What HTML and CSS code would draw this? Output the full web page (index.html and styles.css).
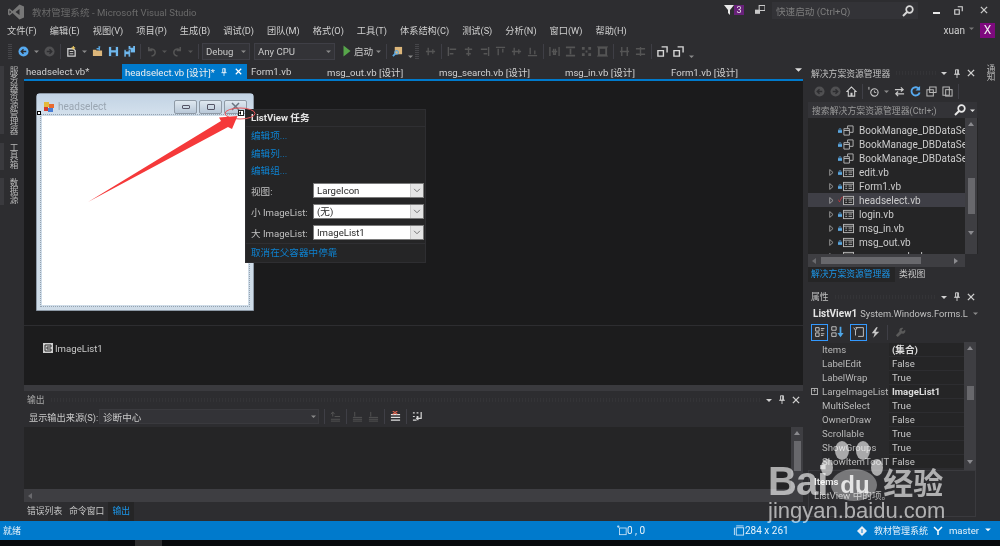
FILE: index.html
```html
<!DOCTYPE html>
<html lang="zh-CN">
<head>
<meta charset="utf-8">
<title>教材管理系统 - Microsoft Visual Studio</title>
<link rel="stylesheet" href="styles.css">
</head>
<body>
<svg class="defs" width="0" height="0" aria-hidden="true">
  <symbol id="i-back" viewBox="0 0 12 12"><circle cx="6" cy="6" r="5.5" fill="currentColor"/><path d="M9 6H4M6 3.5 3.5 6 6 8.5" fill="none" stroke="#2d2d30" stroke-width="1.5"/></symbol>
  <symbol id="i-new" viewBox="0 0 12 12"><path d="M2 3h6l2 2v6H2z" fill="none" stroke="#d0d0d0" stroke-width="1.4"/><path d="M4 6h4M4 8.5h4" stroke="#d0d0d0"/><path d="M8 0v4M6 2h4" stroke="#e8c55e" stroke-width="1.2"/></symbol>
  <symbol id="i-open" viewBox="0 0 12 12"><path d="M1 4h3l1 1h6v6H1z" fill="#dcb67a"/><path d="M5 3h3M8 1v4M7 1h2" stroke="#5aa7e0" stroke-width="1.4" fill="none"/></symbol>
  <symbol id="i-save" viewBox="0 0 12 12"><path d="M1 1h10v10H1z" fill="#6fb8ee"/><path d="M3.5 1h5v3.5h-5zM3.5 7h5v4h-5z" fill="#2d2d30"/></symbol>
  <symbol id="i-saveall" viewBox="0 0 12 12"><path d="M5 0h7v7H5z" fill="#6fb8ee"/><path d="M0 4h7v8H0z" fill="#6fb8ee" stroke="#2d2d30" stroke-width=".7"/><path d="M2 4h3v2H2zM7 0h3v2H7zM2 9h3v3H2z" fill="#2d2d30"/></symbol>
  <symbol id="i-undo" viewBox="0 0 12 12"><path d="M3 1v4h4M3 5c2-3 7-2 7 2 0 2-2 3.500-4 4" fill="none" stroke="#555" stroke-width="1.6"/></symbol>
  <symbol id="i-redo" viewBox="0 0 12 12"><path d="M9 1v4H5M9 5C7 2 2 3 2 7c0 2 2 3.500 4 4" fill="none" stroke="#555" stroke-width="1.6"/></symbol>
  <symbol id="i-play" viewBox="0 0 8 12"><path d="M.5.5 7.500 6 .5 11.500z" fill="#57a64a"/></symbol>
  <symbol id="i-find" viewBox="0 0 12 12"><path d="M3 1h8v8H3z" fill="#dcb67a"/><path d="M1 11l3-3" stroke="#5aa7e0" stroke-width="2"/><circle cx="5" cy="7" r="2" fill="none" stroke="#5aa7e0" stroke-width="1.2"/></symbol>
  <symbol id="i-a1" viewBox="0 0 12 12"><path d="M1.500 1v10M3 3.500h7M3 8.500h4" stroke="#555" stroke-width="1.500" fill="none"/></symbol>
  <symbol id="i-a2" viewBox="0 0 12 12"><path d="M6 1v10M2 3.500h8M3.500 8.500h5" stroke="#555" stroke-width="1.500" fill="none"/></symbol>
  <symbol id="i-a3" viewBox="0 0 12 12"><path d="M10.500 1v10M2 3.500h7M5 8.500h4" stroke="#555" stroke-width="1.500" fill="none"/></symbol>
  <symbol id="i-a4" viewBox="0 0 12 12"><path d="M1 1.500h10M3.500 3v7M8.500 3v4" stroke="#555" stroke-width="1.500" fill="none"/></symbol>
  <symbol id="i-a5" viewBox="0 0 12 12"><path d="M1 6h10M3.500 2v8M8.500 3.500v5" stroke="#555" stroke-width="1.500" fill="none"/></symbol>
  <symbol id="i-a6" viewBox="0 0 12 12"><path d="M1 10.500h10M3.500 2v7M8.500 5v4" stroke="#555" stroke-width="1.500" fill="none"/></symbol>
  <symbol id="i-s1" viewBox="0 0 12 12"><path d="M1 1v10M11 1v10M3 6h6M5 3v6h2V3" stroke="#555" stroke-width="1.500" fill="none"/></symbol>
  <symbol id="i-s2" viewBox="0 0 12 12"><path d="M1 1.500h10M1 10.500h10M6 3v6" stroke="#555" stroke-width="1.800" fill="none"/></symbol>
  <symbol id="i-s3" viewBox="0 0 12 12"><path d="M1 1h3v3H1zM8 1h3v3H8zM1 8h3v3H1zM8 8h3v3H8zM5 5h2v2H5z" fill="#555"/></symbol>
  <symbol id="i-s4" viewBox="0 0 12 12"><rect x="2" y="2" width="8" height="8" fill="none" stroke="#555" stroke-width="2"/><path d="M0 1h12M0 11h12" stroke="#555"/></symbol>
  <symbol id="i-v1" viewBox="0 0 12 12"><path d="M3 1v10M9 1v10M1 6h10" stroke="#555" stroke-width="1.500" fill="none"/></symbol>
  <symbol id="i-v2" viewBox="0 0 12 12"><path d="M1 3h10M1 9h10M6 1v10" stroke="#555" stroke-width="1.500" fill="none"/></symbol>
  <symbol id="i-order" viewBox="0 0 12 12"><path d="M1 5h6v6H1z" fill="none" stroke="#d8d8d8" stroke-width="1.500"/><path d="M5 1h6v6" fill="none" stroke="#d8d8d8" stroke-width="1.500"/></symbol>
  <symbol id="i-home" viewBox="0 0 12 12"><path d="M6 1 1 6h1.500v5h3V8h1v3h3V6H11z" fill="none" stroke="#d0d0d0" stroke-width="1.200"/></symbol>
  <symbol id="i-clock" viewBox="0 0 12 12"><circle cx="7" cy="7" r="4" fill="none" stroke="#c8c8c8" stroke-width="1.200"/><path d="M7 5v2h2M1 1v3" stroke="#c8c8c8"/></symbol>
  <symbol id="i-sync" viewBox="0 0 12 12"><path d="M1 4h9M7.500 1.500 10 4 7.500 6M11 8.500H2M4.500 6 2 8.500 4.500 11" fill="none" stroke="#c8c8c8" stroke-width="1.300"/></symbol>
  <symbol id="i-refresh" viewBox="0 0 12 12"><path d="M10 3.500A4.500 4.500 0 1 0 10.500 7" fill="none" stroke="#57aaf0" stroke-width="2"/><path d="M11 0v5H6z" fill="#57aaf0"/></symbol>
  <symbol id="i-copies" viewBox="0 0 12 12"><path d="M4 1h7v6H4zM1 4h7v7H1z" fill="#2d2d30" stroke="#b8b8b8" stroke-width="1.100"/></symbol>
  <symbol id="i-doc" viewBox="0 0 12 12"><path d="M1 1h7v9H1z" fill="none" stroke="#b8b8b8" stroke-width="1.100"/><rect x="4" y="4" width="7" height="7" fill="none" stroke="#b8b8b8" stroke-width="1.100"/></symbol>
  <symbol id="i-form" viewBox="0 0 12 12"><rect x=".5" y="1.500" width="11" height="9" fill="#252526" stroke="#b9b9b9"/><path d="M.5 3.500h11M2.500 5.500h2M6 5.500h4M2.500 8h2M6 8h4" stroke="#b9b9b9"/></symbol>
  <symbol id="i-ds" viewBox="0 0 12 12"><path d="M5 1h6v7H5z" fill="#252526" stroke="#b9b9b9"/><path d="M1 4h6v7H1z" fill="#252526" stroke="#b9b9b9"/><path d="M1 6h6" stroke="#b9b9b9"/></symbol>
  <symbol id="i-lock" viewBox="0 0 6 7"><path d="M1.500 3V1h3v2" fill="none" stroke="#5aa7e0"/><rect y="3" width="6" height="4" fill="#5aa7e0"/></symbol>
  <symbol id="i-cat" viewBox="0 0 16 16"><path d="M3 3h4v4H3zM3 9h4v4H3z" fill="none" stroke="#cfcfcf"/><path d="M9 4h4M9 6h3M9 10h4M9 12h3" stroke="#cfcfcf"/></symbol>
  <symbol id="i-az" viewBox="0 0 16 16"><path d="M2 2h5v4H2zM2 9h5v4H2z" fill="none" stroke="#cfcfcf"/><path d="M12 2v10" stroke="#4ea6e8" stroke-width="2"/><path d="M8.500 9h7L12 14z" fill="#4ea6e8"/></symbol>
  <symbol id="i-prop" viewBox="0 0 16 16"><path d="M4 3h9v10H7" fill="none" stroke="#cfcfcf"/><path d="M4 6 2 3M4 6l2-3M4 6v6" stroke="#cfcfcf"/></symbol>
  <symbol id="i-bolt" viewBox="0 0 12 14"><path d="M7 0 1 8h4l-2 6 8-8H6l3-6z" fill="#c8c8c8"/></symbol>
  <symbol id="i-wrench" viewBox="0 0 12 12"><path d="M11 3 8.500 5 7 3.500 9 1C6.500 0 4 2 4.800 4.800L1 9l2 2 4.200-3.800C10 8 12 5.500 11 3z" fill="#5a5a5a"/></symbol>
  <symbol id="i-menu" viewBox="0 0 8 7"><path d="M0 2h8L4 6z" fill="currentColor"/></symbol>
  <symbol id="i-pin" viewBox="0 0 8 12"><path d="M2 1h4v6H2zM0 7h8M4 7v5M4.500 1v6" fill="none" stroke="currentColor" stroke-width="1.200"/></symbol>
  <symbol id="i-x" viewBox="0 0 9 9"><path d="M1 1l7 7M8 1 1 8" stroke="currentColor" stroke-width="1.500"/></symbol>
  <symbol id="i-mag" viewBox="0 0 12 12"><circle cx="7.500" cy="4.500" r="3.300" fill="none" stroke="currentColor" stroke-width="1.700"/><path d="M5 7 1 11" stroke="currentColor" stroke-width="2"/></symbol>
  <symbol id="i-tree" viewBox="0 0 6 9"><path d="M.7.700 5 4.500.7 8.300z" fill="none" stroke="#b0b0b0"/></symbol>
  <symbol id="i-chev" viewBox="0 0 9 6"><path d="M1 1l3.500 3.500L8 1" fill="none" stroke="#777" stroke-width="1.200"/></symbol>
  <symbol id="i-o1" viewBox="0 0 12 12"><path d="M1 9h10M1 11h10M5 6h6M3 1v5M1 3.500l2-2.500 2 2.500" stroke="#555" fill="none"/></symbol>
  <symbol id="i-o2" viewBox="0 0 12 12"><path d="M1 7h10M1 9h10M1 11h10M3 1v5" stroke="#555" fill="none"/></symbol>
  <symbol id="i-o3" viewBox="0 0 12 12"><path d="M1 4h10M1 7h10M1 10h10" stroke="#e0e0e0" stroke-width="1.200"/><path d="M3 0l5 3.500M8 0 3 3.500" stroke="#e0644f" stroke-width="1.200"/></symbol>
  <symbol id="i-o4" viewBox="0 0 12 12"><path d="M1 2h2M5 2h2M1 6h2M5 6h2M1 10h4M10 1v7H5M7 6 5 8l2 2" fill="none" stroke="#d8d8d8" stroke-width="1.300"/></symbol>
  <symbol id="i-bars" viewBox="0 0 12 12"><path d="M1 1h10v10H1z" fill="#cfcfcf"/><path d="M3 3h6v2H5v2h4v2H3z" fill="none" stroke="#333"/></symbol>
  <symbol id="i-app" viewBox="0 0 10 10"><rect width="5" height="5" fill="#e4b93b"/><rect x="5" y="2" width="5" height="4" fill="#e96a2e"/><rect y="5" width="4" height="4" fill="#d33c30"/><rect x="4" y="6" width="5" height="4" fill="#4a7fd4"/></symbol>
  <symbol id="i-vs" viewBox="0 0 16 16"><path d="M11.500.5 16 2.500v11L11.500 15.500 4.500 9 1.500 11.500 0 10.500v-5L1.500 4.500 4.500 7zM11.500 5 7.500 8l4 3zM1.500 6.300v3.400L3.200 8z" fill="#777"/></symbol>
  <symbol id="i-git" viewBox="0 0 10 10"><path d="M1 1l4 4 4-4M5 5v4" fill="none" stroke="#fff" stroke-width="1.500"/></symbol>
  <symbol id="i-diamond" viewBox="0 0 10 10"><path d="M5 0l5 5-5 5-5-5z" fill="#e6eef6"/><path d="M5 3v4" stroke="#007acc"/></symbol>
  <symbol id="i-pos" viewBox="0 0 12 12"><rect x="3" y="3" width="8" height="8" fill="none" stroke="#cfe6f7"/><path d="M0 1h3M1.500 0v3" stroke="#cfe6f7"/></symbol>
  <symbol id="i-size" viewBox="0 0 12 12"><rect x="3" y="3" width="8" height="8" fill="none" stroke="#cfe6f7"/><path d="M3 1h8M1 3v8" stroke="#cfe6f7"/></symbol>
  <symbol id="i-filter" viewBox="0 0 10 10"><path d="M0 0h10L6 5v5L4 8V5z" fill="#e8e8e8"/></symbol>
  <symbol id="i-feedback" viewBox="0 0 12 12"><path d="M5 0h7v6H5z" fill="none" stroke="#c8c8c8" stroke-width="1.300"/><path d="M0 5h6v5H0z" fill="#c8c8c8"/></symbol>
</svg>

<div class="app">
  <header class="titlebar">
    <svg class="vs-logo"><use href="#i-vs"/></svg>
    <span class="app-title">教材管理系统 - Microsoft Visual Studio</span>
    <span class="spacer"></span>
    <svg class="ic10"><use href="#i-filter"/></svg>
    <span class="badge">3</span>
    <svg class="feedback"><use href="#i-feedback"/></svg>
    <div class="quick"><span>快速启动 (Ctrl+Q)</span><svg class="ic12 quick-mag"><use href="#i-mag"/></svg></div>
    <div class="winbtns">
      <span class="w-min"></span>
      <svg class="ic12 w-res"><use href="#i-order"/></svg>
      <svg class="ic9 w-x"><use href="#i-x"/></svg>
    </div>
  </header>

  <nav class="menubar">
    <span>文件(F)</span><span>编辑(E)</span><span>视图(V)</span><span>项目(P)</span><span>生成(B)</span><span>调试(D)</span><span>团队(M)</span><span>格式(O)</span><span>工具(T)</span><span>体系结构(C)</span><span>测试(S)</span><span>分析(N)</span><span>窗口(W)</span><span>帮助(H)</span>
    <span class="spacer"></span>
    <span class="user">xuan</span><svg class="user-arrow"><use href="#i-menu"/></svg>
    <span class="avatar">X</span>
  </nav>

  <div class="toolbar">
    <span class="grip"></span>
    <svg class="t t-blue w12"><use href="#i-back"/></svg><svg class="mn"><use href="#i-menu"/></svg>
    <svg class="t t-dim w12 flip"><use href="#i-back"/></svg>
    <i class="sep"></i>
    <svg class="t w12"><use href="#i-new"/></svg><svg class="mn"><use href="#i-menu"/></svg>
    <svg class="t w12"><use href="#i-open"/></svg>
    <svg class="t w12"><use href="#i-save"/></svg>
    <svg class="t w12"><use href="#i-saveall"/></svg>
    <i class="sep"></i>
    <svg class="t w12"><use href="#i-undo"/></svg><svg class="mn mn-dim"><use href="#i-menu"/></svg>
    <svg class="t w12"><use href="#i-redo"/></svg><svg class="mn mn-dim"><use href="#i-menu"/></svg>
    <i class="sep sep-pre"></i>
    <div class="combo c-debug"><span>Debug</span><svg class="mn"><use href="#i-menu"/></svg></div>
    <div class="combo c-cpu"><span>Any CPU</span><svg class="mn"><use href="#i-menu"/></svg></div>
    <svg class="t play"><use href="#i-play"/></svg>
    <span class="start">启动</span><svg class="mn"><use href="#i-menu"/></svg>
    <i class="sep"></i>
    <svg class="t w12"><use href="#i-find"/></svg><svg class="mn mn-low"><use href="#i-menu"/></svg>
    <span class="grip grip-b"></span>
    <svg class="t w12"><use href="#i-a5"/></svg>
    <i class="sep"></i>
    <svg class="t w12"><use href="#i-a1"/></svg><svg class="t w12"><use href="#i-a2"/></svg><svg class="t w12"><use href="#i-a3"/></svg><svg class="t w12"><use href="#i-a4"/></svg><svg class="t w12"><use href="#i-a5"/></svg><svg class="t w12"><use href="#i-a6"/></svg>
    <i class="sep"></i>
    <svg class="t w12"><use href="#i-s1"/></svg><svg class="t w12"><use href="#i-s2"/></svg><svg class="t w12"><use href="#i-s3"/></svg><svg class="t w12"><use href="#i-s4"/></svg>
    <i class="sep"></i>
    <svg class="t w12"><use href="#i-v1"/></svg><svg class="t w12"><use href="#i-v2"/></svg>
    <i class="sep"></i>
    <svg class="t w12"><use href="#i-order"/></svg><svg class="t w12"><use href="#i-order"/></svg><svg class="mn mn-low"><use href="#i-menu"/></svg>
  </div>

  <div class="main">
    <aside class="rail-left">
      <div class="rail-tab rt1"><span>服务器资源管理器</span></div>
      <div class="rail-tab rt2"><span>工具箱</span></div>
      <div class="rail-tab rt3"><span>数据源</span></div>
    </aside>

    <section class="center">
      <div class="tabs">
        <span class="tab t1">headselect.vb*</span>
        <span class="tab active"><span>headselect.vb [设计]*</span><svg class="tab-pin"><use href="#i-pin"/></svg><svg class="tab-x"><use href="#i-x"/></svg></span>
        <span class="tab t3">Form1.vb</span>
        <span class="tab t4">msg_out.vb [设计]</span>
        <span class="tab t5">msg_search.vb [设计]</span>
        <span class="tab t6">msg_in.vb [设计]</span>
        <span class="tab t7">Form1.vb [设计]</span>
        <span class="spacer"></span>
        <svg class="tab-over"><use href="#i-menu"/></svg>
      </div>

      <div class="designer">
        <div class="form">
          <div class="form-title">
            <svg class="form-ic"><use href="#i-app"/></svg>
            <span class="form-name">headselect</span>
            <span class="spacer"></span>
            <span class="fbtn"><i class="g-min"></i></span>
            <span class="fbtn"><i class="g-max"></i></span>
            <span class="fbtn fx"><svg><use href="#i-x"/></svg></span>
          </div>
          <div class="listview-sel"><div class="listview"></div></div>
        </div>
      </div>

      <div class="tray">
        <svg class="ic12"><use href="#i-bars"/></svg><span>ImageList1</span>
      </div>

      <div class="splitter"></div>

      <div class="output">
        <div class="panel-head out-head">
          <span>输出</span><i class="dots"></i>
          <svg class="ph-m"><use href="#i-menu"/></svg><svg class="ph-p"><use href="#i-pin"/></svg><svg class="ph-x"><use href="#i-x"/></svg>
        </div>
        <div class="out-tools">
          <span class="out-label">显示输出来源(S):</span>
          <div class="out-combo"><span>诊断中心</span><svg class="mn"><use href="#i-menu"/></svg></div>
          <i class="sep"></i>
          <svg class="t w12"><use href="#i-o1"/></svg>
          <i class="sep"></i>
          <svg class="t w12"><use href="#i-o2"/></svg>
          <svg class="t w12"><use href="#i-o2"/></svg>
          <i class="sep"></i>
          <svg class="t w12"><use href="#i-o3"/></svg>
          <i class="sep"></i>
          <svg class="t w12"><use href="#i-o4"/></svg>
        </div>
        <div class="out-body">
          <div class="out-text"></div>
          <div class="vscroll">
            <span class="sb-up"></span><span class="sb-thumb out-thumb"></span>
          </div>
        </div>
        <div class="hscroll"><span class="sb-left"></span></div>
        <div class="out-tabs">
          <span>错误列表</span><span>命令窗口</span><span class="out-active">输出</span>
        </div>
      </div>
    </section>

    <aside class="side">
      <div class="panel-head side-head">
        <span>解决方案资源管理器</span><i class="dots"></i>
        <svg class="ph-m"><use href="#i-menu"/></svg><svg class="ph-p"><use href="#i-pin"/></svg><svg class="ph-x"><use href="#i-x"/></svg>
      </div>
      <div class="se-tools">
        <svg class="t w12 t-dim"><use href="#i-back"/></svg>
        <svg class="t w12 t-dim flip"><use href="#i-back"/></svg>
        <svg class="t w12"><use href="#i-home"/></svg>
        <i class="sep"></i>
        <svg class="t w12"><use href="#i-clock"/></svg><svg class="mn"><use href="#i-menu"/></svg>
        <svg class="t w12"><use href="#i-sync"/></svg>
        <svg class="t w12"><use href="#i-refresh"/></svg>
        <svg class="t w12"><use href="#i-copies"/></svg>
        <svg class="t w12"><use href="#i-doc"/></svg>
        <i class="sep"></i>
      </div>
      <div class="se-search">
        <span class="se-q">搜索解决方案资源管理器(Ctrl+;)</span>
        <span class="se-qb"><svg class="ic12"><use href="#i-mag"/></svg><svg class="mn"><use href="#i-menu"/></svg></span>
      </div>
      <div class="tree-wrap">
        <div class="tree">
          <div class="row"><i class="tw"></i><svg class="lk"><use href="#i-lock"/></svg><svg class="fi"><use href="#i-ds"/></svg><span>BookManage_DBDataSet</span></div>
          <div class="row"><i class="tw"></i><svg class="lk"><use href="#i-lock"/></svg><svg class="fi"><use href="#i-ds"/></svg><span>BookManage_DBDataSet</span></div>
          <div class="row"><i class="tw"></i><svg class="lk"><use href="#i-lock"/></svg><svg class="fi"><use href="#i-ds"/></svg><span>BookManage_DBDataSet</span></div>
          <div class="row"><svg class="tw"><use href="#i-tree"/></svg><svg class="lk"><use href="#i-lock"/></svg><svg class="fi"><use href="#i-form"/></svg><span>edit.vb</span></div>
          <div class="row"><svg class="tw"><use href="#i-tree"/></svg><svg class="lk"><use href="#i-lock"/></svg><svg class="fi"><use href="#i-form"/></svg><span>Form1.vb</span></div>
          <div class="row sel"><svg class="tw"><use href="#i-tree"/></svg><span class="chk">✓</span><svg class="fi"><use href="#i-form"/></svg><span>headselect.vb</span></div>
          <div class="row"><svg class="tw"><use href="#i-tree"/></svg><svg class="lk"><use href="#i-lock"/></svg><svg class="fi"><use href="#i-form"/></svg><span>login.vb</span></div>
          <div class="row"><svg class="tw"><use href="#i-tree"/></svg><svg class="lk"><use href="#i-lock"/></svg><svg class="fi"><use href="#i-form"/></svg><span>msg_in.vb</span></div>
          <div class="row"><svg class="tw"><use href="#i-tree"/></svg><svg class="lk"><use href="#i-lock"/></svg><svg class="fi"><use href="#i-form"/></svg><span>msg_out.vb</span></div>
          <div class="row"><svg class="tw"><use href="#i-tree"/></svg><svg class="lk"><use href="#i-lock"/></svg><svg class="fi"><use href="#i-form"/></svg><span>msg_search.vb</span></div>
        </div>
        <div class="vscroll se-v"><span class="sb-up"></span><span class="sb-thumb se-thumb"></span><span class="sb-down"></span></div>
      </div>
      <div class="se-h"><span class="sb-left"></span><span class="se-hthumb"></span><span class="sb-right"></span></div>
      <div class="se-tabs"><span class="se-active">解决方案资源管理器</span><span class="se-other">类视图</span></div>

      <div class="panel-head props-head">
        <span>属性</span><i class="dots"></i>
        <svg class="ph-m"><use href="#i-menu"/></svg><svg class="ph-p"><use href="#i-pin"/></svg><svg class="ph-x"><use href="#i-x"/></svg>
      </div>
      <div class="obj"><b>ListView1</b><span class="obj-type">System.Windows.Forms.L</span><svg class="mn"><use href="#i-menu"/></svg></div>
      <div class="p-tools">
        <span class="pbtn on"><svg><use href="#i-cat"/></svg></span>
        <span class="pbtn"><svg><use href="#i-az"/></svg></span>
        <span class="pbtn on"><svg><use href="#i-prop"/></svg></span>
        <svg class="p-bolt"><use href="#i-bolt"/></svg>
        <i class="sep"></i>
        <svg class="p-wr"><use href="#i-wrench"/></svg>
      </div>
      <div class="grid-wrap">
        <div class="pgrid">
          <div class="pr"><span class="pn">Items</span><span class="pv"><b>(集合)</b></span></div>
          <div class="pr"><span class="pn">LabelEdit</span><span class="pv">False</span></div>
          <div class="pr"><span class="pn">LabelWrap</span><span class="pv">True</span></div>
          <div class="pr"><span class="plus">+</span><span class="pn">LargeImageList</span><span class="pv"><b>ImageList1</b></span></div>
          <div class="pr"><span class="pn">MultiSelect</span><span class="pv">True</span></div>
          <div class="pr"><span class="pn">OwnerDraw</span><span class="pv">False</span></div>
          <div class="pr"><span class="pn">Scrollable</span><span class="pv">True</span></div>
          <div class="pr"><span class="pn">ShowGroups</span><span class="pv">True</span></div>
          <div class="pr"><span class="pn">ShowItemToolT</span><span class="pv">False</span></div>
        </div>
        <div class="vscroll p-v"><span class="sb-up"></span><span class="sb-thumb p-thumb"></span><span class="sb-down"></span></div>
      </div>
      <div class="desc"><b>Items</b><span>ListView 中的项。</span></div>
    </aside>

    <aside class="rail-right"><div class="rail-tab"><span>通知</span></div></aside>
  </div>

  <footer class="status">
    <span class="st-ready">就绪</span>
    <svg class="st-pos"><use href="#i-pos"/></svg><span class="st-a">0 , 0</span>
    <svg class="st-size"><use href="#i-size"/></svg><span class="st-b">284 x 261</span>
    <span class="spacer"></span>
    <svg class="st-d"><use href="#i-diamond"/></svg><span>教材管理系统</span>
    <svg class="st-g"><use href="#i-git"/></svg><span class="st-m">master</span>
    <svg class="st-up"><use href="#i-menu"/></svg>
  </footer>
  <div class="taskstrip"><i class="task-btn"></i></div>
</div>

<div class="popup">
  <div class="pop-head">ListView 任务</div>
  <div class="pop-links">
    <a>编辑项...</a><a>编辑列...</a><a>编辑组...</a>
  </div>
  <div class="pop-row"><label>视图:</label><div class="pop-combo"><span>LargeIcon</span><i><svg><use href="#i-chev"/></svg></i></div></div>
  <div class="pop-row"><label>小 ImageList:</label><div class="pop-combo"><span>(无)</span><i><svg><use href="#i-chev"/></svg></i></div></div>
  <div class="pop-row"><label>大 ImageList:</label><div class="pop-combo"><span>ImageList1</span><i><svg><use href="#i-chev"/></svg></i></div></div>
  <div class="pop-foot"><a>取消在父容器中停靠</a></div>
</div>

<span class="handle"></span>
<span class="smart"></span>

<svg class="annot" viewBox="0 0 1000 546" aria-hidden="true">
  <ellipse cx="240" cy="113.500" rx="15" ry="5.500" fill="none" stroke="#e8555a" stroke-width="1"/>
  <path d="M88 202 221 121 219 117.500 237.500 116 232 129 228 127Z" fill="#f5393a"/>
</svg>

<div class="watermark">
  <div class="wm-top">
    <span class="wm-bai">Bai</span>
    <span class="wm-paw"><i class="p1"></i><i class="p2"></i><i class="p3"></i><i class="p4"></i><i class="p5"></i><em>du</em></span>
    <span class="wm-jy">经验</span>
  </div>
  <div class="wm-url">jingyan.baidu.com</div>
</div>
</body>
</html>
```

FILE: styles.css
```css
* { box-sizing: border-box; }
html, body { margin: 0; padding: 0; height: 100%; overflow: hidden; background: #2d2d30; }
body {
  font-family: Roboto, "Noto Sans CJK SC", sans-serif;
  font-size: 9.6px;
  color: #c8c8c8;
  position: relative;
  width: 1000px;
  height: 546px;
  white-space: nowrap;
  filter: blur(.35px);
}
svg { display: block; flex: none; }
i, em { font-style: normal; }
.defs { position: absolute; }
.spacer { flex: 1; }
.flip { transform: scaleX(-1); }
.app { display: flex; flex-direction: column; height: 546px; }

/* title */
.titlebar { height: 20px; display: flex; align-items: center; padding: 0 8px; flex: none; }
.vs-logo { width: 16px; height: 16px; margin-top: 4px; }
.app-title { margin-left: 8px; color: #6a6a6a; margin-top: 4px; font-size: 9.6px; }
.ic10 { width: 10px; height: 10px; }
.ic12 { width: 12px; height: 12px; }
.ic9 { width: 9px; height: 9px; }
.badge { width: 10px; height: 10px; background: #68217a; color: #e8e8e8; font-size: 9px; line-height: 10px; text-align: center; margin-right: 11px; }
.feedback { width: 10px; height: 11px; margin-right: 7px; }
.quick { width: 146px; height: 17px; background: #333337; margin-top: 1px; display: flex; align-items: center; justify-content: space-between; padding: 0 4px; color: #7d7d7d; }
.quick-mag { color: #d8d8d8; }
.winbtns { display: flex; align-items: center; margin-left: 11px; margin-right: -1px; color: #c8c8c8; }
.w-min { width: 7px; height: 2px; background: #e8e8e8; margin: 5px 14px 0 4px; }
.w-res { width: 9px; height: 9px; margin-right: 17px; }
.w-x { width: 8px; height: 8px; margin-right: 5px; }

/* menu */
.menubar { height: 20px; flex: none; display: flex; align-items: center; gap: 13px; padding: 0 0 0 7px; color: #d0d0d0; font-size: 9.2px; }
.menubar .user { margin-right: -9px; font-size: 10px; }
.user-arrow { width: 5px; height: 5px; color: #777; margin-right: -7px; margin-top: -4px; }
.avatar { width: 15px; height: 15px; background: #7e0a7e; color: #f0f0f0; text-align: center; line-height: 15px; font-size: 12px; margin-right: 5px; }

/* toolbar */
.toolbar { height: 22px; flex: none; display: flex; align-items: center; padding-left: 8px; }
.grip { width: 4px; height: 15px; margin-right: 6px; background: repeating-linear-gradient(0deg, #46464a 0 1px, transparent 1px 2px); }
.grip-b { margin-left: -3px; }
.t { height: 11px; margin-right: 5px; color: #5aa7e0; }
.w12 { width: 11px; }
.t-blue { color: #57aaf0; }
.t-dim { color: #505052; }
.play { width: 8px; height: 12px; margin-left: 4px; margin-right: 3px; }
.mn { width: 5px; height: 5px; color: #8a8a8a; margin-right: 5px; }
.mn-dim { color: #555; }
.mn-low { margin-top: 10px; }
.sep { width: 1px; height: 15px; background: #3f3f46; flex: none; margin: 0 5px 0 0; }
.sep-pre { margin-right: 3px; }
.combo { height: 17px; background: #333337; border: 1px solid #3f3f46; display: flex; align-items: center; justify-content: space-between; padding-left: 3px; color: #c8c8c8; margin-right: 4px; }
.combo .mn { margin-right: 3px; }
.c-debug { width: 48px; }
.c-cpu { width: 81px; }
.start { margin-right: 3px; }

/* main */
.main { flex: none; height: 459px; display: flex; }
.rail-left { width: 24px; flex: none; display: flex; flex-direction: column; position: relative; }
.rail-tab { position: relative; padding-left: 8px; }
.rail-tab::before { content: ""; position: absolute; left: 0; top: 0; bottom: 0; width: 4px; background: #3a3a3e; }
.rail-tab span { writing-mode: vertical-rl; font-size: 8.6px; line-height: 10px; color: #b8b8b8; display: block; }
.rt1 { margin-top: 4px; height: 68px; }
.rt2 { margin-top: 9px; height: 27px; }
.rt3 { margin-top: 8px; height: 27px; }

.center { width: 779px; flex: none; display: flex; flex-direction: column; }
.tabs { height: 17px; margin-top: 2px; flex: none; display: flex; border-bottom: 2px solid #007acc; align-items: stretch; color: #d0d0d0; }
.tab { display: flex; align-items: center; }
.t1 { width: 98px; padding-left: 2px; }
.active { width: 125px; background: #007acc; color: #f0f0f0; padding-left: 3px; }
.tab-pin { width: 6px; height: 8px; margin-left: auto; color: #e8f2fa; }
.tab-x { width: 7px; height: 7px; margin: 0 5px 0 8px; color: #fff; }
.t3 { width: 80px; padding-left: 4px; }
.t4 { width: 112px; }
.t5 { width: 126px; }
.t6 { width: 106px; }
.t7 { width: 80px; }
.tab-over { width: 7px; height: 7px; color: #ddd; margin: 2px 1px 0 0; }

.designer { height: 245px; flex: none; background: #1b1b1c; padding: 12px 0 0 12px; border-bottom: 1px solid #2d2d30; }
.form { width: 218px; height: 218px; background: #cfdce8; border: 1px solid #8d99a6; border-radius: 4px 4px 0 0; }
.form-title { height: 20px; display: flex; align-items: center; padding: 5px 6px 0 7px; background: linear-gradient(#c2d3e4, #d3e0ec); }
.form-ic { width: 10px; height: 10px; }
.form-name { margin-left: 4px; color: #9aa6b2; font-size: 10px; }
.fbtn { width: 23px; height: 14px; margin-left: 2px; border: 1px solid #8f9aa6; border-radius: 2px; background: linear-gradient(#dfe8f0, #b9c8d8); display: flex; align-items: center; justify-content: center; }
.g-min { width: 8px; height: 4px; border: 1px solid #556; border-radius: 1px; }
.g-max { width: 8px; height: 6px; border: 1px solid #556; border-radius: 1px; }
.fx svg { width: 9px; height: 9px; color: #6a7480; }
.listview-sel { margin: 0 3px; height: 193px; padding: 1px; border: 1px dotted #95a3b1; }
.listview { height: 100%; background: #fff; }

.tray { height: 59px; flex: none; background: #1c1c1d; display: flex; align-items: flex-start; padding: 16px 0 0 18px; color: #c8c8c8; gap: 1px; }
.tray span { line-height: 14px; }
.splitter { height: 6px; flex: none; background: #3a3a3e; }

.output { flex: 1; display: flex; flex-direction: column; min-height: 0; }
.panel-head { height: 15px; flex: none; display: flex; align-items: center; padding-left: 3px; color: #a8a8a8; font-size: 8.8px; }
.out-head { padding-top: 2px; }
.dots { flex: 1; height: 4px; margin: 0 5px; background-image: radial-gradient(#46464a 0.6px, transparent 0.8px); background-size: 3px 2px; }
.ph-m { width: 6px; height: 6px; color: #d0d0d0; }
.ph-p { width: 6px; height: 9px; color: #d0d0d0; margin-left: 7px; }
.ph-x { width: 8px; height: 8px; color: #d0d0d0; margin: 0 3px 0 7px; }
.out-tools { height: 21px; flex: none; display: flex; align-items: center; padding-left: 5px; }
.out-label { width: 70px; font-size: 9.2px; }
.out-combo { width: 220px; height: 15px; background: #333337; border: 1px solid #3a3a3e; display: flex; align-items: center; justify-content: space-between; padding-left: 3px; margin-right: 5px; }
.out-combo .mn { margin-right: 2px; }
.out-body { height: 62px; flex: none; background: #252526; display: flex; justify-content: flex-end; }
.out-text { flex: 1; }
.vscroll { width: 12px; background: #3e3e42; display: flex; flex-direction: column; align-items: center; position: relative; flex: none; }
.sb-up, .sb-down { width: 0; height: 0; border: 3.5px solid transparent; flex: none; }
.sb-up { border-bottom: 4px solid #8a8a8e; border-top-width: 0; margin-top: 4px; }
.sb-down { border-top: 4px solid #8a8a8e; border-bottom-width: 0; margin-bottom: 4px; }
.sb-thumb { width: 7px; background: #68686c; display: block; flex: none; }
.out-thumb { height: 30px; margin-top: 6px; }
.hscroll { height: 13px; flex: none; background: #3e3e42; display: flex; align-items: center; padding-left: 4px; }
.sb-left, .sb-right { width: 0; height: 0; border: 3.5px solid transparent; flex: none; }
.sb-left { border-right: 4px solid #6a6a6e; border-left-width: 0; }
.sb-right { border-left: 4px solid #8a8a8e; border-right-width: 0; }
.out-tabs { flex: 1; display: flex; align-items: flex-start; gap: 7px; padding-left: 3px; font-size: 8.8px; }
.out-tabs span { line-height: 19px; height: 20px; }
.out-active { color: #1c97ea; background: #252526; padding: 0 4px; margin-left: -3px; }

/* right */
.side { width: 170px; margin-left: 5px; flex: none; display: flex; flex-direction: column; }
.side-head { margin-top: 3px; height: 16px; }
.side-head, .props-head { color: #c0c0c0; }
.se-tools { height: 21px; flex: none; display: flex; align-items: center; padding-left: 6px; }
.se-search { height: 16px; flex: none; background: #333337; display: flex; align-items: center; justify-content: space-between; padding-left: 4px; color: #9a9a9a; margin-right: 1px; font-size: 8.9px; }
.se-qb { display: flex; align-items: center; gap: 4px; color: #e8e8e8; }
.se-qb .mn { margin-right: 2px; color: #e0e0e0; }
.tree-wrap { display: flex; height: 136px; flex: none; background: #252526; }
.tree { flex: 1; padding-top: 5px; overflow: hidden; min-width: 0; }
.row { height: 14px; display: flex; align-items: center; padding-left: 21px; color: #cccccc; font-size: 10px; overflow: hidden; }
.row .tw { width: 5px; height: 7px; margin-right: 4px; flex: none; }
.lk { width: 4px; height: 5px; margin-right: 1px; }
.chk { width: 5px; color: #e0333c; font-size: 7px; line-height: 7px; }
.fi { width: 11px; height: 11px; margin: 0 5px 0 0; }
.row.sel { background: #3f3f46; }
.se-v { width: 12px; margin-right: 1px; }
.se-thumb { height: 36px; margin-top: 52px; margin-bottom: 17px; }
.se-h { height: 13px; flex: none; background: #3e3e42; display: flex; align-items: center; padding: 0 4px; margin-right: 13px; }
.se-hthumb { width: 100px; height: 7px; background: #68686c; margin: 0 33px 0 5px; }
.se-tabs { height: 15px; flex: none; display: flex; align-items: stretch; }
.se-active { color: #1c97ea; background: #252526; padding: 0 3px; line-height: 14px; width: 87px; font-size: 8.8px; }
.se-other { padding-left: 4px; line-height: 15px; font-size: 8.8px; }
.props-head { margin-top: 7px; height: 15px; padding-left: 3px; }
.obj { height: 18px; flex: none; display: flex; align-items: center; padding-left: 5px; }
.obj b { font-size: 10px; color: #e4e4e4; font-weight: 700; }
.obj-type { margin-left: 3px; width: 111px; overflow: hidden; color: #c0c0c0; font-size: 9.3px; }
.obj .mn { margin: 0 0 0 4px; }
.p-tools { height: 20px; flex: none; display: flex; align-items: center; padding-left: 3px; }
.pbtn { width: 17px; height: 17px; border: 1px solid transparent; display: flex; align-items: center; justify-content: center; }
.pbtn.on { border-color: #3399ff; }
.pbtn svg { width: 14px; height: 14px; }
.pbtn:nth-child(2) { margin-right: 5px; }
.p-bolt { width: 9px; height: 11px; margin: 0 7px 0 4px; }
.p-tools .sep { margin: 0 7px 0 0; }
.p-wr { width: 11px; height: 11px; }
.grid-wrap { height: 128px; flex: none; display: flex; background: #2d2d30; }
.pgrid { flex: 1; padding: 1px 0 0 14px; }
.pr { height: 14px; display: flex; position: relative; align-items: center; line-height: 14px; border-bottom: 1px solid #2d2d30; background: #252526; }
.pn { width: 67px; overflow: hidden; background: #2a2a2c; height: 14px; color: #b8b8b8; flex: none; }
.pv { margin-left: 3px; color: #c8c8c8; }
.pv b { font-weight: 700; color: #dcdcdc; }
.plus { position: absolute; left: -11px; top: 3px; width: 7px; height: 7px; border: 1px solid #aaa; font-size: 7px; line-height: 5px; text-align: center; color: #bbb; }
.p-v { width: 12px; margin-right: 2px; }
.p-thumb { height: 14px; margin-top: 36px; margin-bottom: 60px; }
.desc { height: 47px; flex: none; display: flex; flex-direction: column; padding: 4px 0 0 5px; border: 1px solid #3a3a3e; margin-right: 2px; color: #b8b8b8; line-height: 14px; }
.desc b { color: #e4e4e4; }

.rail-right { flex: 1; padding-top: 2px; }
.rail-right .rail-tab { padding-left: 7px; height: 20px; }
.rail-right .rail-tab::before { display: none; }

/* status */
.status { height: 19px; flex: none; background: #007acc; display: flex; align-items: center; color: #e6f2fa; padding-left: 3px; font-size: 9px; }
.st-ready { width: 614px; }
.st-pos { width: 10px; height: 11px; }
.st-a { width: 106px; font-size: 10px; }
.st-size { width: 12px; height: 11px; }
.st-b { font-size: 10px; }
.st-d { width: 10px; height: 10px; margin-right: 7px; }
.st-g { width: 10px; height: 10px; margin: 0 6px 0 5px; }
.st-m { font-size: 9.6px; }
.st-up { width: 6px; height: 5px; color: #fff; margin: 0 9px 3px 6px; }
.taskstrip { flex: 1; background: #07090c; display: flex; padding-left: 135px; }
.task-btn { width: 27px; background: #2d2d2f; }

/* popup */
.popup { position: absolute; left: 245px; top: 109px; width: 181px; height: 154px; background: #252526; border: 1px solid #2e2e31; padding: 0 1px 0 5px; color: #c0c0c0; }
.pop-head { height: 17px; line-height: 16px; font-weight: 700; color: #e4e4e4; margin: 0 -1px 0 -5px; padding-left: 5px; border-bottom: 1px solid #2f2f32; }
.pop-links { display: flex; flex-direction: column; height: 53px; }
.pop-links a { height: 17.5px; line-height: 17.5px; color: #0e82d0; }
.pop-row { display: flex; align-items: center; height: 21px; }
.pop-row label { width: 62px; flex: none; }
.pop-combo { width: 111px; height: 15px; background: #fff; border: 1px solid #7a7a7a; color: #2a2a2a; display: flex; justify-content: space-between; padding-left: 3px; line-height: 13px; }
.pop-combo i { width: 13px; background: #e4e4e4; border-left: 1px solid #ccc; display: flex; align-items: center; justify-content: center; }
.pop-combo svg { width: 8px; height: 5px; }
.pop-foot { margin: 0 -1px 0 -5px; padding-left: 5px; border-top: 1px solid #2f2f32; line-height: 17px; }
.pop-foot a { color: #0e82d0; }

.handle { position: absolute; left: 37px; top: 111px; width: 4px; height: 4px; background: #fff; border: 1px solid #000; }
.smart { position: absolute; left: 238px; top: 110px; width: 6px; height: 6px; background: #fff; border: 1px solid #222; }
.smart::after { content: ""; position: absolute; left: 0; top: 0; width: 0; height: 0; border: 2px solid transparent; border-right-color: #000; border-left-width: 0; }
.annot { position: absolute; left: 0; top: 0; width: 1000px; height: 546px; pointer-events: none; }

/* watermark */
.watermark { position: absolute; left: 768px; top: 440px; width: 180px; color: rgba(255,255,255,.62); font-family: "Liberation Sans", sans-serif; pointer-events: none; }
.wm-top { display: flex; align-items: flex-end; height: 60px; }
.wm-bai { font-size: 40px; font-weight: 700; line-height: 38px; letter-spacing: -1px; }
.wm-paw { position: relative; width: 56px; height: 60px; display: block; flex: none; }
.wm-paw i { position: absolute; background: rgba(255,255,255,.6); border-radius: 50%; }
.p1 { left: -6px; top: 19px; width: 12px; height: 17px; }
.p2 { left: 8px; top: 1px; width: 14px; height: 19px; }
.p3 { left: 29px; top: 1px; width: 14px; height: 19px; }
.p4 { left: 44px; top: 19px; width: 12px; height: 17px; }
.p5 { left: 4px; top: 29px; width: 46px; height: 32px; opacity: .6; }
.wm-paw em { position: absolute; left: 13px; top: 31px; font-size: 24px; font-weight: 700; line-height: 28px; color: rgba(255,255,255,.8); }
.wm-jy { font-family: "Noto Sans CJK SC", sans-serif; font-size: 30px; line-height: 38px; font-weight: 700; }
.wm-url { font-size: 22px; line-height: 26px; margin-top: -2px; }
```
